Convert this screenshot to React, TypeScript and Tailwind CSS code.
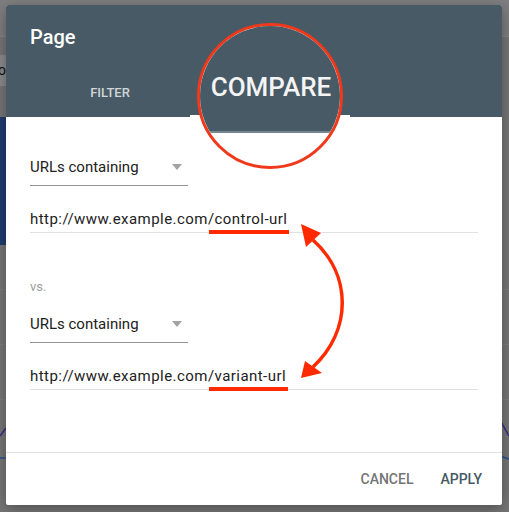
import React from "react";

function Dropdown() {
  return (
    <div className="w-[158px] border-b border-[#949494] pb-[8px]">
      <div className="flex h-[20px] items-center justify-between pr-[6px]">
        <span className="text-[15px] leading-[20px] text-[#212121]">URLs containing</span>
        <span className="h-0 w-0 border-x-[5.5px] border-t-[6px] border-x-transparent border-t-[#a3a3a3]" />
      </div>
    </div>
  );
}

function UrlField({ slug }: { slug: string }) {
  return (
    <div className="h-[24px] border-b border-[#e0e0e0]">
      <p className="text-[15px] leading-[20px] tracking-[0.45px] text-[#212121]">
        http://www.example.com/
        <span className="relative">
          {slug}
          <span className="absolute left-[-6px] right-[-2px] top-[20px] h-[4px] bg-[#ff2a00]" />
        </span>
      </p>
    </div>
  );
}

export default function App() {
  return (
    <div className="relative h-[512px] w-[509px] overflow-hidden bg-[#777778] font-['Roboto','Liberation_Sans',sans-serif]">
      {/* page behind the scrim */}
      <div className="flex flex-col">
        <div className="h-[37px] border-b border-[#868687] bg-[#7f7f81]" />
        <div className="h-[18px]" />
        <div className="flex h-[31px] w-[6px] items-center justify-end overflow-hidden bg-[#8c8c8f] text-[14px] text-[#111]">
          o
        </div>
        <div className="h-[31px]" />
        <div className="h-[128px] w-[8px] bg-[#203c70]" />
        <div className="h-[45px] border-b border-[#7e7e7f]" />
        <div className="h-[55px] border-b border-[#7e7e7f]" />
        <div className="h-[55px] border-b border-[#7e7e7f]" />
      </div>
      <svg className="pointer-events-none absolute left-0 top-0" width="509" height="512">
        <polyline points="0,436 6,428" fill="none" stroke="#3a2a86" strokeWidth="1.5" />
        <line x1="0" y1="458" x2="8" y2="458" stroke="#2a4f94" strokeWidth="1.5" />
        <polyline points="500,420 509,436" fill="none" stroke="#3a2a86" strokeWidth="1.5" />
        <polyline points="500,456 509,459" fill="none" stroke="#2a4f94" strokeWidth="1.5" />
      </svg>

      {/* dialog */}
      <div className="absolute left-[6px] top-[5px] flex h-[500px] w-[496px] flex-col overflow-hidden rounded-[2px] bg-white shadow-[0_4px_16px_rgba(0,0,0,0.35)]">
        <div className="h-[112px] bg-[#475a65] pl-[24px]">
          <div className="h-[64px] pt-[18px] text-[20px] font-medium leading-[28px] text-white">Page</div>
          <div className="flex h-[48px]">
            <div className="flex w-[160px] items-center justify-center text-[13px] font-medium text-white/75">
              FILTER
            </div>
            {/* active tab; its label is shown enlarged in the magnifier */}
            <div className="w-[160px] border-b-2 border-white" />
          </div>
        </div>

        <div className="flex-1 px-[24px]">
          <div className="mt-[40px]">
            <Dropdown />
          </div>
          <div className="mt-[23px]">
            <UrlField slug="control-url" />
          </div>
          <p className="mt-[46px] text-[13px] leading-[16px] text-[#9e9e9e]">vs.</p>
          <div className="mt-[19px]">
            <Dropdown />
          </div>
          <div className="mt-[23px]">
            <UrlField slug="variant-url" />
          </div>
        </div>

        <div className="flex h-[53px] items-center justify-end gap-[27px] border-t border-[#e0e0e0] pr-[20px] text-[14px] font-medium">
          <button className="text-[#757575]">CANCEL</button>
          <button className="text-[#455a64]">APPLY</button>
        </div>
      </div>

      {/* magnifier circle */}
      <div className="absolute left-[197px] top-[23px] flex h-[146px] w-[146px] flex-col overflow-hidden rounded-full border-[3px] border-[#f0381a] bg-white">
        <div className="h-[105px] shrink-0 bg-[#475a65] pl-[2px] pt-[45px] text-center text-[26px] font-medium leading-[32px] text-[#f4f4f4]">
          COMPARE
        </div>
        <div className="h-[2px] shrink-0 bg-[#75868f]" />
      </div>

      {/* double arrow */}
      <svg className="pointer-events-none absolute left-0 top-0" width="509" height="512">
        <path d="M 313 240 C 352 275, 352 330, 313 367" fill="none" stroke="#ff2a00" strokeWidth="3.5" />
        <polygon points="301,224 321,233 306,247" fill="#ff2a00" />
        <polygon points="301,378 305,361 322,373" fill="#ff2a00" />
      </svg>
    </div>
  );
}
